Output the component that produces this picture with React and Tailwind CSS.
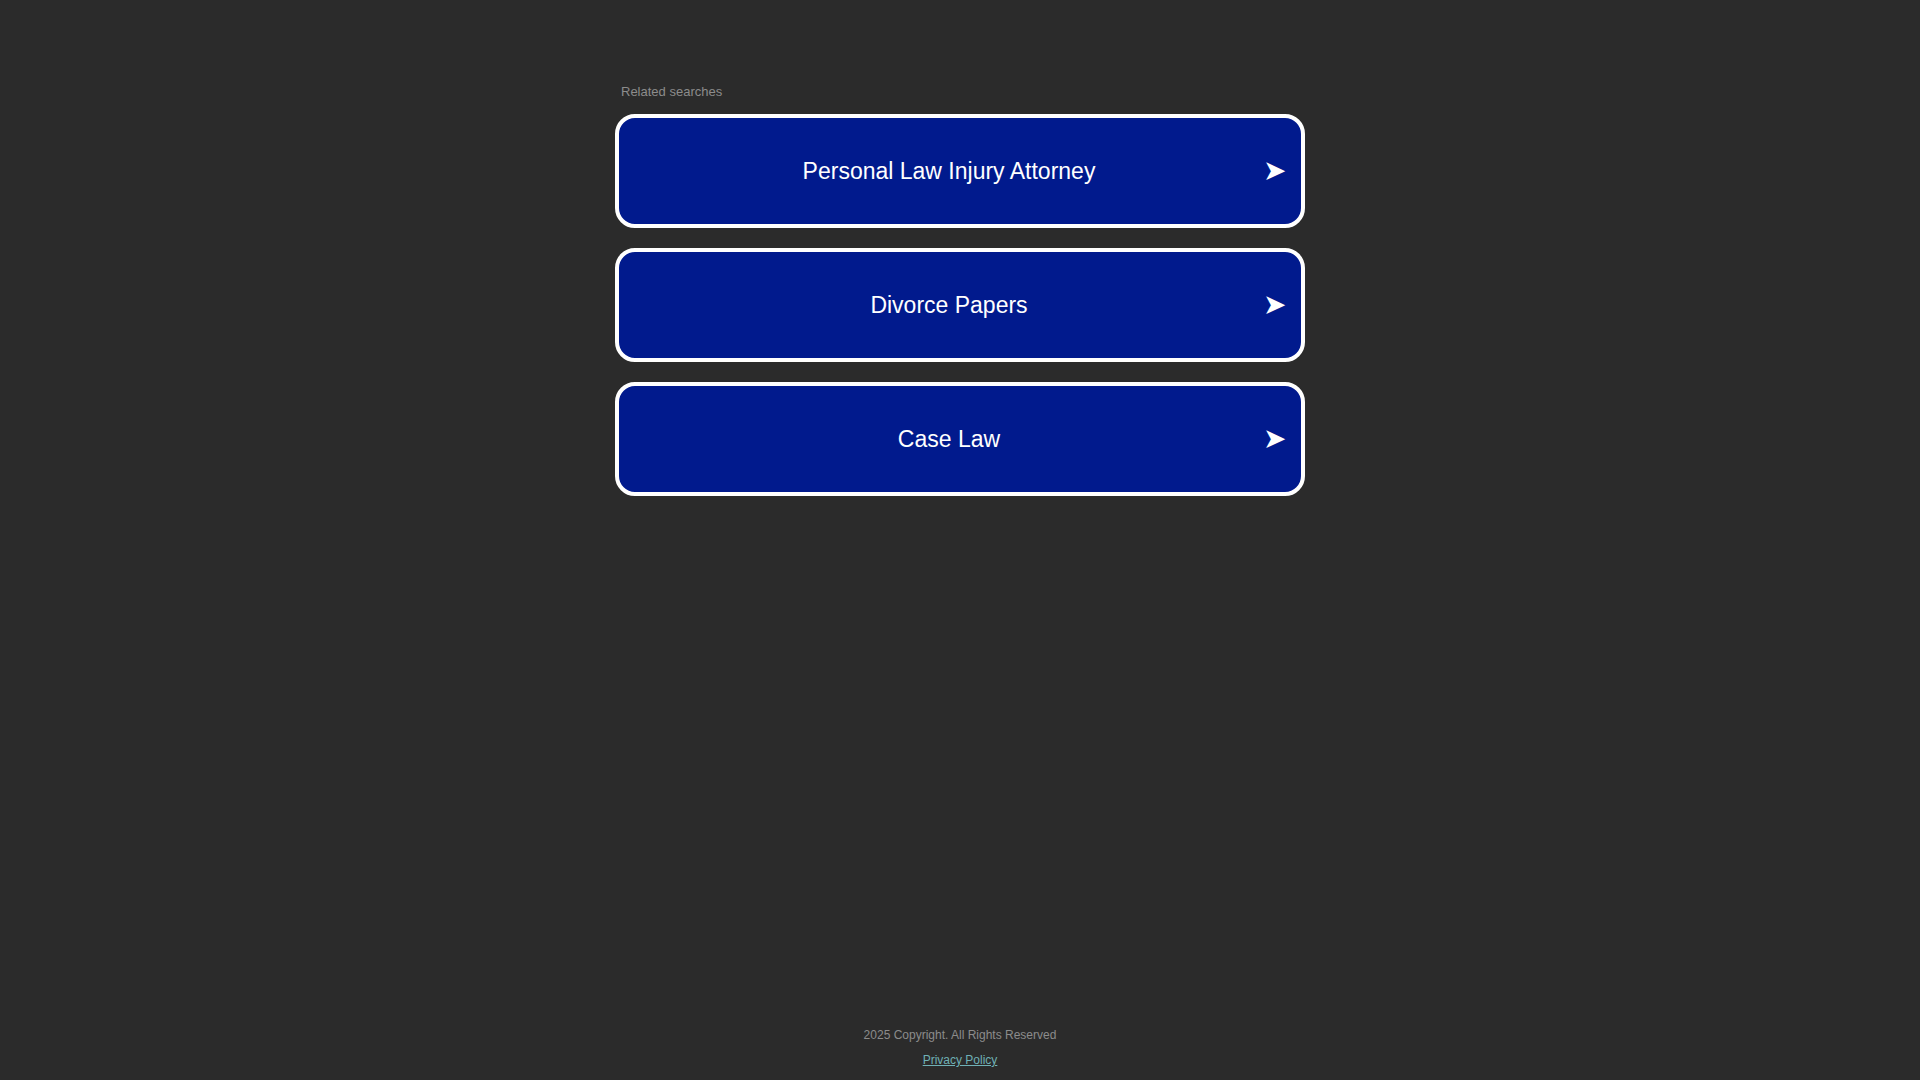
import React from 'react';

const searches = ['Personal Law Injury Attorney', 'Divorce Papers', 'Case Law'];

const App = () => {
  return (
    <div
      className="min-h-screen bg-[#2b2b2b] flex flex-col"
      style={{ fontFamily: '"Liberation Sans", Arial, sans-serif' }}
    >
      <div className="w-[690px] mx-auto pt-[84px]">
        <div className="pl-[6px] text-[13px] leading-[16px] text-[#8c8c8c] mb-[14px]">
          Related searches
        </div>
        <div className="flex flex-col gap-[20px]">
          {searches.map((term) => (
            <a
              key={term}
              href="#"
              className="h-[114px] flex items-center bg-[#011a8d] border-[4px] border-white rounded-[20px] text-white no-underline"
            >
              <span className="flex-1 text-center pl-[16px] text-[23px] leading-[28px]">{term}</span>
              <span
                className="w-[22px] mr-[16px] text-[28px] leading-[28px] text-white text-center"
                style={{ fontFamily: '"DejaVu Sans", sans-serif' }}
              >
                ➤
              </span>
            </a>
          ))}
        </div>
      </div>
      <div className="mt-auto pb-[12px] flex flex-col items-center text-[12px] leading-[15px]">
        <div className="text-[#8c8c8c]">2025 Copyright. All Rights Reserved</div>
        <a href="#" className="mt-[10px] text-[#6fb1b6] underline">
          Privacy Policy
        </a>
      </div>
    </div>
  );
};

export default App;
